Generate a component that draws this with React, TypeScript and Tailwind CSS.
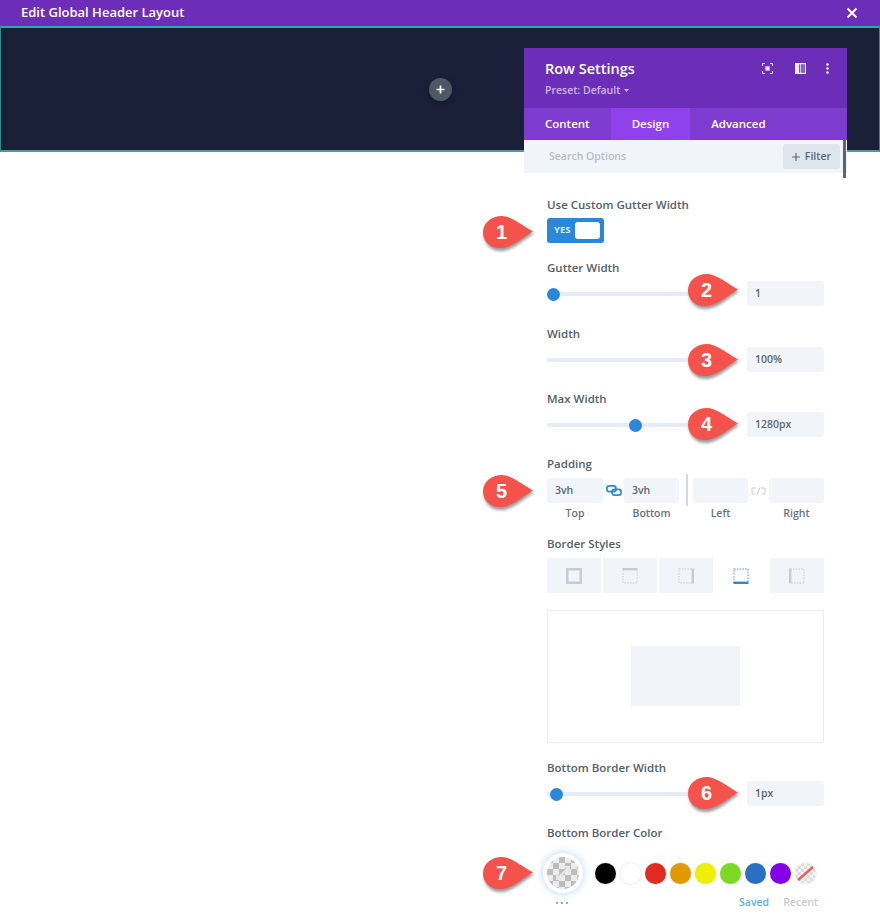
import React from "react";

const font = { fontFamily: '"Open Sans", "Liberation Sans", sans-serif' };

function Label({ children, className = "" }: { children: React.ReactNode; className?: string }) {
  return <div className={`h-4 text-[11.5px] leading-4 font-semibold text-[#535e6c] whitespace-nowrap ${className}`}>{children}</div>;
}

function Field({ value, className = "" }: { value?: string; className?: string }) {
  return <div className={`h-[25px] bg-[#f1f5f9] rounded-[3px] px-2 text-[10.5px] leading-[25px] font-semibold text-[#5e6770] ${className}`}>{value}</div>;
}

function SliderRow({ value, pct, className = "" }: { value: string; pct?: number; className?: string }) {
  return (
    <div className={`flex items-center justify-between ${className}`}>
      <div className="relative w-[164px] h-1 mt-[1px] bg-[#e6ecf5] rounded-full">
        {pct !== undefined && (
          <div className="absolute top-[-4px] w-[13px] h-[13px] rounded-full bg-[#2b87da]" style={{ left: pct }} />
        )}
      </div>
      <Field value={value} className="w-[77px]" />
    </div>
  );
}

function Callout({ n, x, y }: { n: number; x: number; y: number }) {
  return (
    <div className="absolute w-[50px] h-[34px]" style={{ left: x, top: y }}>
      <svg width="54" height="40" viewBox="0 0 54 40" className="absolute left-0 top-0 overflow-visible">
        <path d="M19 1 C27 1 36 8 50 16 C41 20 32 31 19 33 C8 34 0 27 0 17 C0 7 8 1 19 1 Z" fill="#6f6f6f" opacity="0.7" transform="translate(1 2)" style={{ filter: "blur(1.5px)" }} />
        <path d="M19 0 C27 0 36 7 50 15.5 C41 20 32 30 19 32 C8 33 0 26 0 16.5 C0 7 8 0 19 0 Z" fill="#f4524a" />
      </svg>
      <div className="absolute left-0 top-0 w-[37px] h-[33px] text-center text-[20px] leading-[33px] font-bold text-white" style={{ fontFamily: '"Liberation Sans", sans-serif' }}>{n}</div>
    </div>
  );
}

function Dotted({ solid, color, dot }: { solid: "all" | "top" | "right" | "bottom" | "left"; color: string; dot: string }) {
  const lines: Record<string, number[]> = {
    top: [0.5, 1.2, 15.5, 1.2],
    right: [14.8, 0.5, 14.8, 15.5],
    bottom: [0.5, 14.8, 15.5, 14.8],
    left: [1.2, 0.5, 1.2, 15.5],
  };
  return (
    <svg width="16" height="16" viewBox="0 0 16 16">
      {solid === "all" ? (
        <rect x="1.25" y="1.25" width="13.5" height="13.5" fill="none" stroke={color} strokeWidth="2.5" />
      ) : (
        <>
          <rect x="1" y="1" width="14" height="14" fill="none" stroke={dot} strokeWidth="1.4" strokeDasharray="1.5 1.3" />
          <line x1={lines[solid][0]} y1={lines[solid][1]} x2={lines[solid][2]} y2={lines[solid][3]} stroke={color} strokeWidth="2.4" />
        </>
      )}
    </svg>
  );
}

const swatches = ["#000000", "#ffffff", "#e02b20", "#e09900", "#edf000", "#7cda24", "#2b6fc4", "#8300e9"];

export default function App() {
  return (
    <div className="relative w-[880px] h-[920px] overflow-hidden bg-white" style={font}>
      <div className="flex items-center justify-between h-[26px] bg-[#6c2eb9] pl-[21px] pr-[22px]">
        <span className="text-[13px] font-semibold text-white">Edit Global Header Layout</span>
        <svg width="12" height="12" viewBox="0 0 12 12"><path d="M1.5 1.5 L10.5 10.5 M10.5 1.5 L1.5 10.5" stroke="#fff" strokeWidth="2" /></svg>
      </div>
      <div className="flex items-center justify-center h-[126px] bg-[#1b2039] border-t-2 border-b-2 border-x border-t-[#2fa6ad] border-b-[#4f9a9c] border-x-[#2c8a8a]">
        <div className="flex items-center justify-center w-[23px] h-[23px] rounded-full bg-[#4c5866] shadow-[0_2px_6px_rgba(0,0,0,0.3)]">
          <svg width="9" height="9" viewBox="0 0 9 9"><path d="M4.5 0.5 V8.5 M0.5 4.5 H8.5" stroke="#fff" strokeWidth="1.7" /></svg>
        </div>
      </div>

      {/* Settings modal */}
      <div className="absolute left-[524px] top-[48px] w-[323px]">
        <div className="relative h-[60px] bg-[#6c2eb9] pl-[21px] pr-[16px]">
          <div className="pt-[10px] text-[14.5px] leading-[22px] font-semibold text-white">Row Settings</div>
          <div className="flex items-center gap-1 mt-[2px] text-[10.5px] leading-[16px] font-semibold text-[#cdb4ee]">
            Preset: Default
            <svg width="5" height="3" viewBox="0 0 5 3"><path d="M0 0 H5 L2.5 3 Z" fill="#cdb4ee" /></svg>
          </div>
          <div className="absolute right-[18px] top-[15px] flex items-center gap-[22px]">
            <svg width="11" height="11" viewBox="0 0 11 11" fill="none" stroke="#e9dcf8" strokeWidth="1">
              <path d="M0.5 3 V0.5 H3 M8 0.5 H10.5 V3 M10.5 8 V10.5 H8 M3 10.5 H0.5 V8" />
              <rect x="3.3" y="3.3" width="4.4" height="4.4" fill="#e9dcf8" stroke="none" />
            </svg>
            <svg width="11" height="11" viewBox="0 0 11 11">
              <path fillRule="evenodd" d="M0 0 H11 V11 H0 Z M4 1.2 V9.8 H4.8 V1.2 Z M5.8 1.5 V9.5 H9.8 V1.5 Z" fill="#efe6fb" />
              <rect x="6" y="1.5" width="3.8" height="8" fill="#8c5fc9" />
            </svg>
            <svg width="3" height="11" viewBox="0 0 3 11" fill="#efe6fb" className="-ml-[2px]"><circle cx="1.5" cy="1.5" r="1.3" /><circle cx="1.5" cy="5.5" r="1.3" /><circle cx="1.5" cy="9.5" r="1.3" /></svg>
          </div>
        </div>
        <div className="flex h-8 bg-[#7e3bd0] text-[11.5px] font-semibold text-white leading-8">
          <div className="px-[21px]">Content</div>
          <div className="px-[21px] bg-[#8f42ec]">Design</div>
          <div className="px-[21px]">Advanced</div>
        </div>
        <div className="relative flex items-center justify-between h-[33px] bg-[#f1f5f9] pl-[25px] pr-[7px]">
          <span className="mt-[1px] text-[10.5px] font-semibold text-[#b4bcc8]">Search Options</span>
          <div className="flex items-center gap-[5px] h-[25px] px-[9px] rounded-[3px] bg-[#dfe5ec] text-[10.5px] font-semibold text-[#5e6770]">
            <svg width="8" height="8" viewBox="0 0 8 8"><path d="M4 0 V8 M0 4 H8" stroke="#5e6770" strokeWidth="1.2" /></svg>
            Filter
          </div>
          <div className="absolute right-[1px] top-0 w-[3px] h-[38px] bg-[#5b6470]" />
        </div>

        <div className="bg-white pl-[23px] pr-[23px] pt-[24px]">
          <Label>Use Custom Gutter Width</Label>
          <div className="flex items-center justify-between w-[57px] h-[25px] mt-[5px] pl-[7px] pr-[4px] rounded-[3px] bg-[#2b87da]">
            <span className="text-[9.5px] font-bold text-[#dcebfa]">YES</span>
            <span className="w-[25px] h-[17px] rounded-[3px] bg-white" />
          </div>

          <Label className="mt-[17px]">Gutter Width</Label>
          <SliderRow value="1" pct={0} className="mt-[5px]" />

          <Label className="mt-[20px]">Width</Label>
          <SliderRow value="100%" className="mt-[5px]" />

          <Label className="mt-[19px]">Max Width</Label>
          <SliderRow value="1280px" pct={82} className="mt-[5px]" />

          <Label className="mt-[19px]">Padding</Label>
          <div className="flex mt-[6px] h-[25px]">
            <Field value="3vh" className="w-[56px]" />
            <div className="flex w-[21px] items-center justify-center">
              <svg width="16" height="11" viewBox="0 0 16 11" fill="none" stroke="#2b87da" strokeWidth="1.7">
                <rect x="0.9" y="0.9" width="9" height="5.8" rx="2.4" /><rect x="6.1" y="4.3" width="9" height="5.8" rx="2.4" />
              </svg>
            </div>
            <Field value="3vh" className="w-[55px]" />
            <div className="ml-[7px] mr-[5px] -mt-[4px] w-[2px] h-[32px] bg-[#d5dae1]" />
            <Field className="w-[55px]" />
            <div className="flex w-[21px] items-center justify-center">
              <svg width="15" height="8" viewBox="0 0 15 8" fill="none" stroke="#c5ccd6" strokeWidth="1">
                <path d="M5 1 H1 V7 H4 M10 1 H14 V7 H11 M6 7.5 L9 0.5" />
              </svg>
            </div>
            <Field className="w-[55px]" />
          </div>
          <div className="flex h-4 mt-[2px] text-center text-[10.5px] leading-4 font-semibold text-[#68727f]">
            <span className="w-[56px]">Top</span>
            <span className="ml-[21px] w-[55px]">Bottom</span>
            <span className="ml-[14px] w-[55px]">Left</span>
            <span className="ml-[21px] w-[55px]">Right</span>
          </div>

          <Label className="mt-[15px]">Border Styles</Label>
          <div className="flex justify-between mt-[6px] h-[35px]">
            {(["all", "top", "right", "bottom", "left"] as const).map((side) => {
              const active = side === "bottom";
              return (
                <div key={side} className={`flex items-center justify-center w-[54px] ${active ? "bg-white" : "bg-[#f1f5f9]"}`}>
                  <Dotted solid={side} color={active ? "#2b87da" : "#c5ccd6"} dot={active ? "#7db5e8" : "#d2d8e0"} />
                </div>
              );
            })}
          </div>

          <div className="flex items-center justify-center mt-[17px] h-[133px] border border-[#eaeef3]">
            <div className="w-[109px] h-[60px] -mt-[1px] bg-[#f1f5f9]" />
          </div>

          <Label className="mt-[17px]">Bottom Border Width</Label>
          <SliderRow value="1px" pct={3} className="mt-[5px]" />

          <Label className="mt-[19px]">Bottom Border Color</Label>
          <div className="flex items-center mt-[12px] -ml-[4px] h-[40px]">
            <div className="w-10 h-10 rounded-full bg-white shadow-[0_0_8px_rgba(43,135,218,0.35)] flex items-center justify-center mr-[12px] shrink-0">
              <svg width="32" height="32" viewBox="0 0 32 32">
                <defs>
                  <pattern id="chk" width="12" height="12" patternUnits="userSpaceOnUse">
                    <rect width="12" height="12" fill="#ececec" /><rect width="6" height="6" fill="#bdbdbd" /><rect x="6" y="6" width="6" height="6" fill="#bdbdbd" />
                  </pattern>
                </defs>
                <circle cx="16" cy="16" r="16" fill="url(#chk)" />
                <path d="M10 22 L22 10 M17 10 H22 V15 M10 17 V22 H15" stroke="#e6e6e6" strokeWidth="2" fill="none" />
              </svg>
            </div>
            <div className="flex gap-[4px]">
              {swatches.map((c) => (
                <div key={c} className="w-[21px] h-[21px] rounded-full shadow-[0_0_2px_rgba(0,0,0,0.2)]" style={{ backgroundColor: c }} />
              ))}
              <svg width="21" height="21" viewBox="0 0 21 21" className="rounded-full shadow-[0_0_2px_rgba(0,0,0,0.2)]">
                <defs>
                  <pattern id="chk2" width="6" height="6" patternUnits="userSpaceOnUse">
                    <rect width="6" height="6" fill="#f3f3f3" /><rect width="3" height="3" fill="#dcdcdc" /><rect x="3" y="3" width="3" height="3" fill="#dcdcdc" />
                  </pattern>
                </defs>
                <circle cx="10.5" cy="10.5" r="10.5" fill="url(#chk2)" />
                <path d="M3 17 L18 4" stroke="#ee5a5a" strokeWidth="2.4" />
              </svg>
            </div>
          </div>
          <div className="flex items-center justify-between mt-[1px] pr-[6px]">
            <div className="flex gap-[3px] pl-[9px] mt-[2px]">
              <span className="w-[2px] h-[2px] rounded-full bg-[#7f8a98]" /><span className="w-[2px] h-[2px] rounded-full bg-[#7f8a98]" /><span className="w-[2px] h-[2px] rounded-full bg-[#7f8a98]" />
            </div>
            <div className="flex gap-[14px] text-[10.5px] leading-4 font-semibold">
              <span className="text-[#6aa9e4]">Saved</span>
              <span className="text-[#c3cad4]">Recent</span>
            </div>
          </div>
        </div>
      </div>

      <Callout n={1} x={483} y={216} />
      <Callout n={2} x={688} y={274} />
      <Callout n={3} x={688} y={344} />
      <Callout n={4} x={688} y={408} />
      <Callout n={5} x={483} y={475} />
      <Callout n={6} x={688} y={777} />
      <Callout n={7} x={483} y={857} />
    </div>
  );
}
